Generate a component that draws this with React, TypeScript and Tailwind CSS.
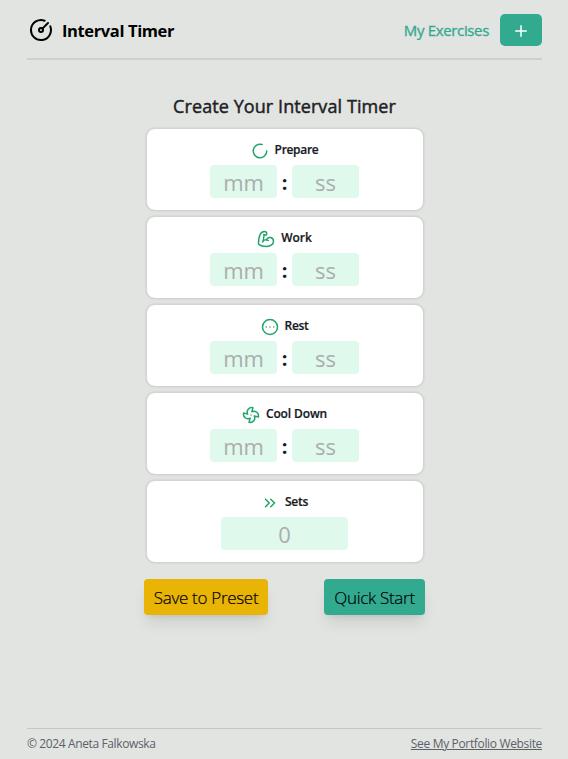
import { BicepsFlexed, ChevronsRight, CircleEllipsis, CircleGauge, Fan, LoaderCircle, Plus, type LucideIcon } from "lucide-react";

type Phase = { name: string; Icon: LucideIcon; label: string };

const phases: Phase[] = [
  { name: "Prepare", Icon: LoaderCircle, label: "tracking-[-0.32px]" },
  { name: "Work", Icon: BicepsFlexed, label: "tracking-[-0.1px]" },
  { name: "Rest", Icon: CircleEllipsis, label: "tracking-[-0.3px]" },
  { name: "Cool Down", Icon: Fan, label: "tracking-[-0.12px]" },
];

const field =
  "h-[33px] rounded bg-[#dff9ec] pt-0.5 text-center text-[22px] text-gray-800 outline-none placeholder:text-[#adadad]";
const card =
  "flex h-[83px] w-[278px] flex-col items-center rounded-[9px] border border-[#d2d4d2] bg-white pt-[11px] shadow-[0_0_2px_rgba(0,0,0,0.15)]";

function Heading({ name, Icon, label }: Phase) {
  return (
    <div className="mb-[5px] flex h-5 items-center gap-1.5">
      <Icon className="mt-px size-[18px] text-[#20a468]" strokeWidth={2} />
      <h2 className={`text-[12px] leading-5 font-semibold text-[#16191d] [-webkit-text-stroke:0.2px] ${label}`}>{name}</h2>
    </div>
  );
}

export default function App() {
  return (
    <div className="flex h-[759px] w-[568px] flex-col bg-[#e2e4e1] pr-[26px] pl-[27px] font-['Open_Sans','Noto_Sans',sans-serif]">
      <header className="flex h-[60px] items-center justify-between border-b-2 border-[#cdcfd1]">
        <div className="flex items-center gap-[9px] pt-0.5 pl-0.5">
          <CircleGauge className="size-6 text-black" strokeWidth={2} />
          <span className="pt-0.5 text-[16.5px] font-bold tracking-[-0.38px] text-black">Interval Timer</span>
        </div>
        <nav className="flex items-center gap-[11px] pt-0.5">
          <a className="text-[15px] tracking-[-0.35px] text-[#32a98e] [-webkit-text-stroke:0.3px]">My Exercises</a>
          <button className="flex h-8 w-[42px] items-center justify-center rounded-[5px] bg-[#32aa8f] text-white">
            <Plus className="mt-0.5 size-[18px]" strokeWidth={2} />
          </button>
        </nav>
      </header>

      <main className="flex flex-1 flex-col items-center pt-[32px]">
        <h1 className="h-[36px] text-[18px] leading-7 tracking-[0.08px] text-[#1d2126] [-webkit-text-stroke:0.45px]">Create Your Interval Timer</h1>
        <div className="flex flex-col gap-[5.1px]">
          {phases.map((phase) => (
            <section key={phase.name} className={card}>
              <Heading {...phase} />
              <div className="flex h-[33px] items-center">
                <input className={`${field} w-[67px]`} placeholder="mm" />
                <span className="h-[33px] w-[15px] pt-0.5 text-center text-[20px] leading-8 font-bold text-[#16191d]">:</span>
                <input className={`${field} w-[67px]`} placeholder="ss" />
              </div>
            </section>
          ))}
          <section className={card}>
            <Heading name="Sets" Icon={ChevronsRight} label="tracking-[-0.25px]" />
            <input className={`${field} w-[127px]`} placeholder="0" />
          </section>
        </div>
        <div className="mt-4 flex w-[281px] justify-between text-[17px] font-light text-black [-webkit-text-stroke:0.2px]">
          <button className="h-9 w-[124px] rounded bg-[#e9b406] tracking-[-0.3px] whitespace-nowrap shadow-lg">Save to Preset</button>
          <button className="h-9 w-[101px] rounded bg-[#32aa8f] tracking-[-0.3px] whitespace-nowrap shadow-lg">Quick Start</button>
        </div>
      </main>

      <footer className="flex h-[31px] items-center justify-between border-t border-[#c3c6ca] text-[12px] text-[#5b6168]">
        <span className="tracking-[-0.38px]">© 2024 Aneta Falkowska</span>
        <a className="tracking-[-0.34px] underline">See My Portfolio Website</a>
      </footer>
    </div>
  );
}
